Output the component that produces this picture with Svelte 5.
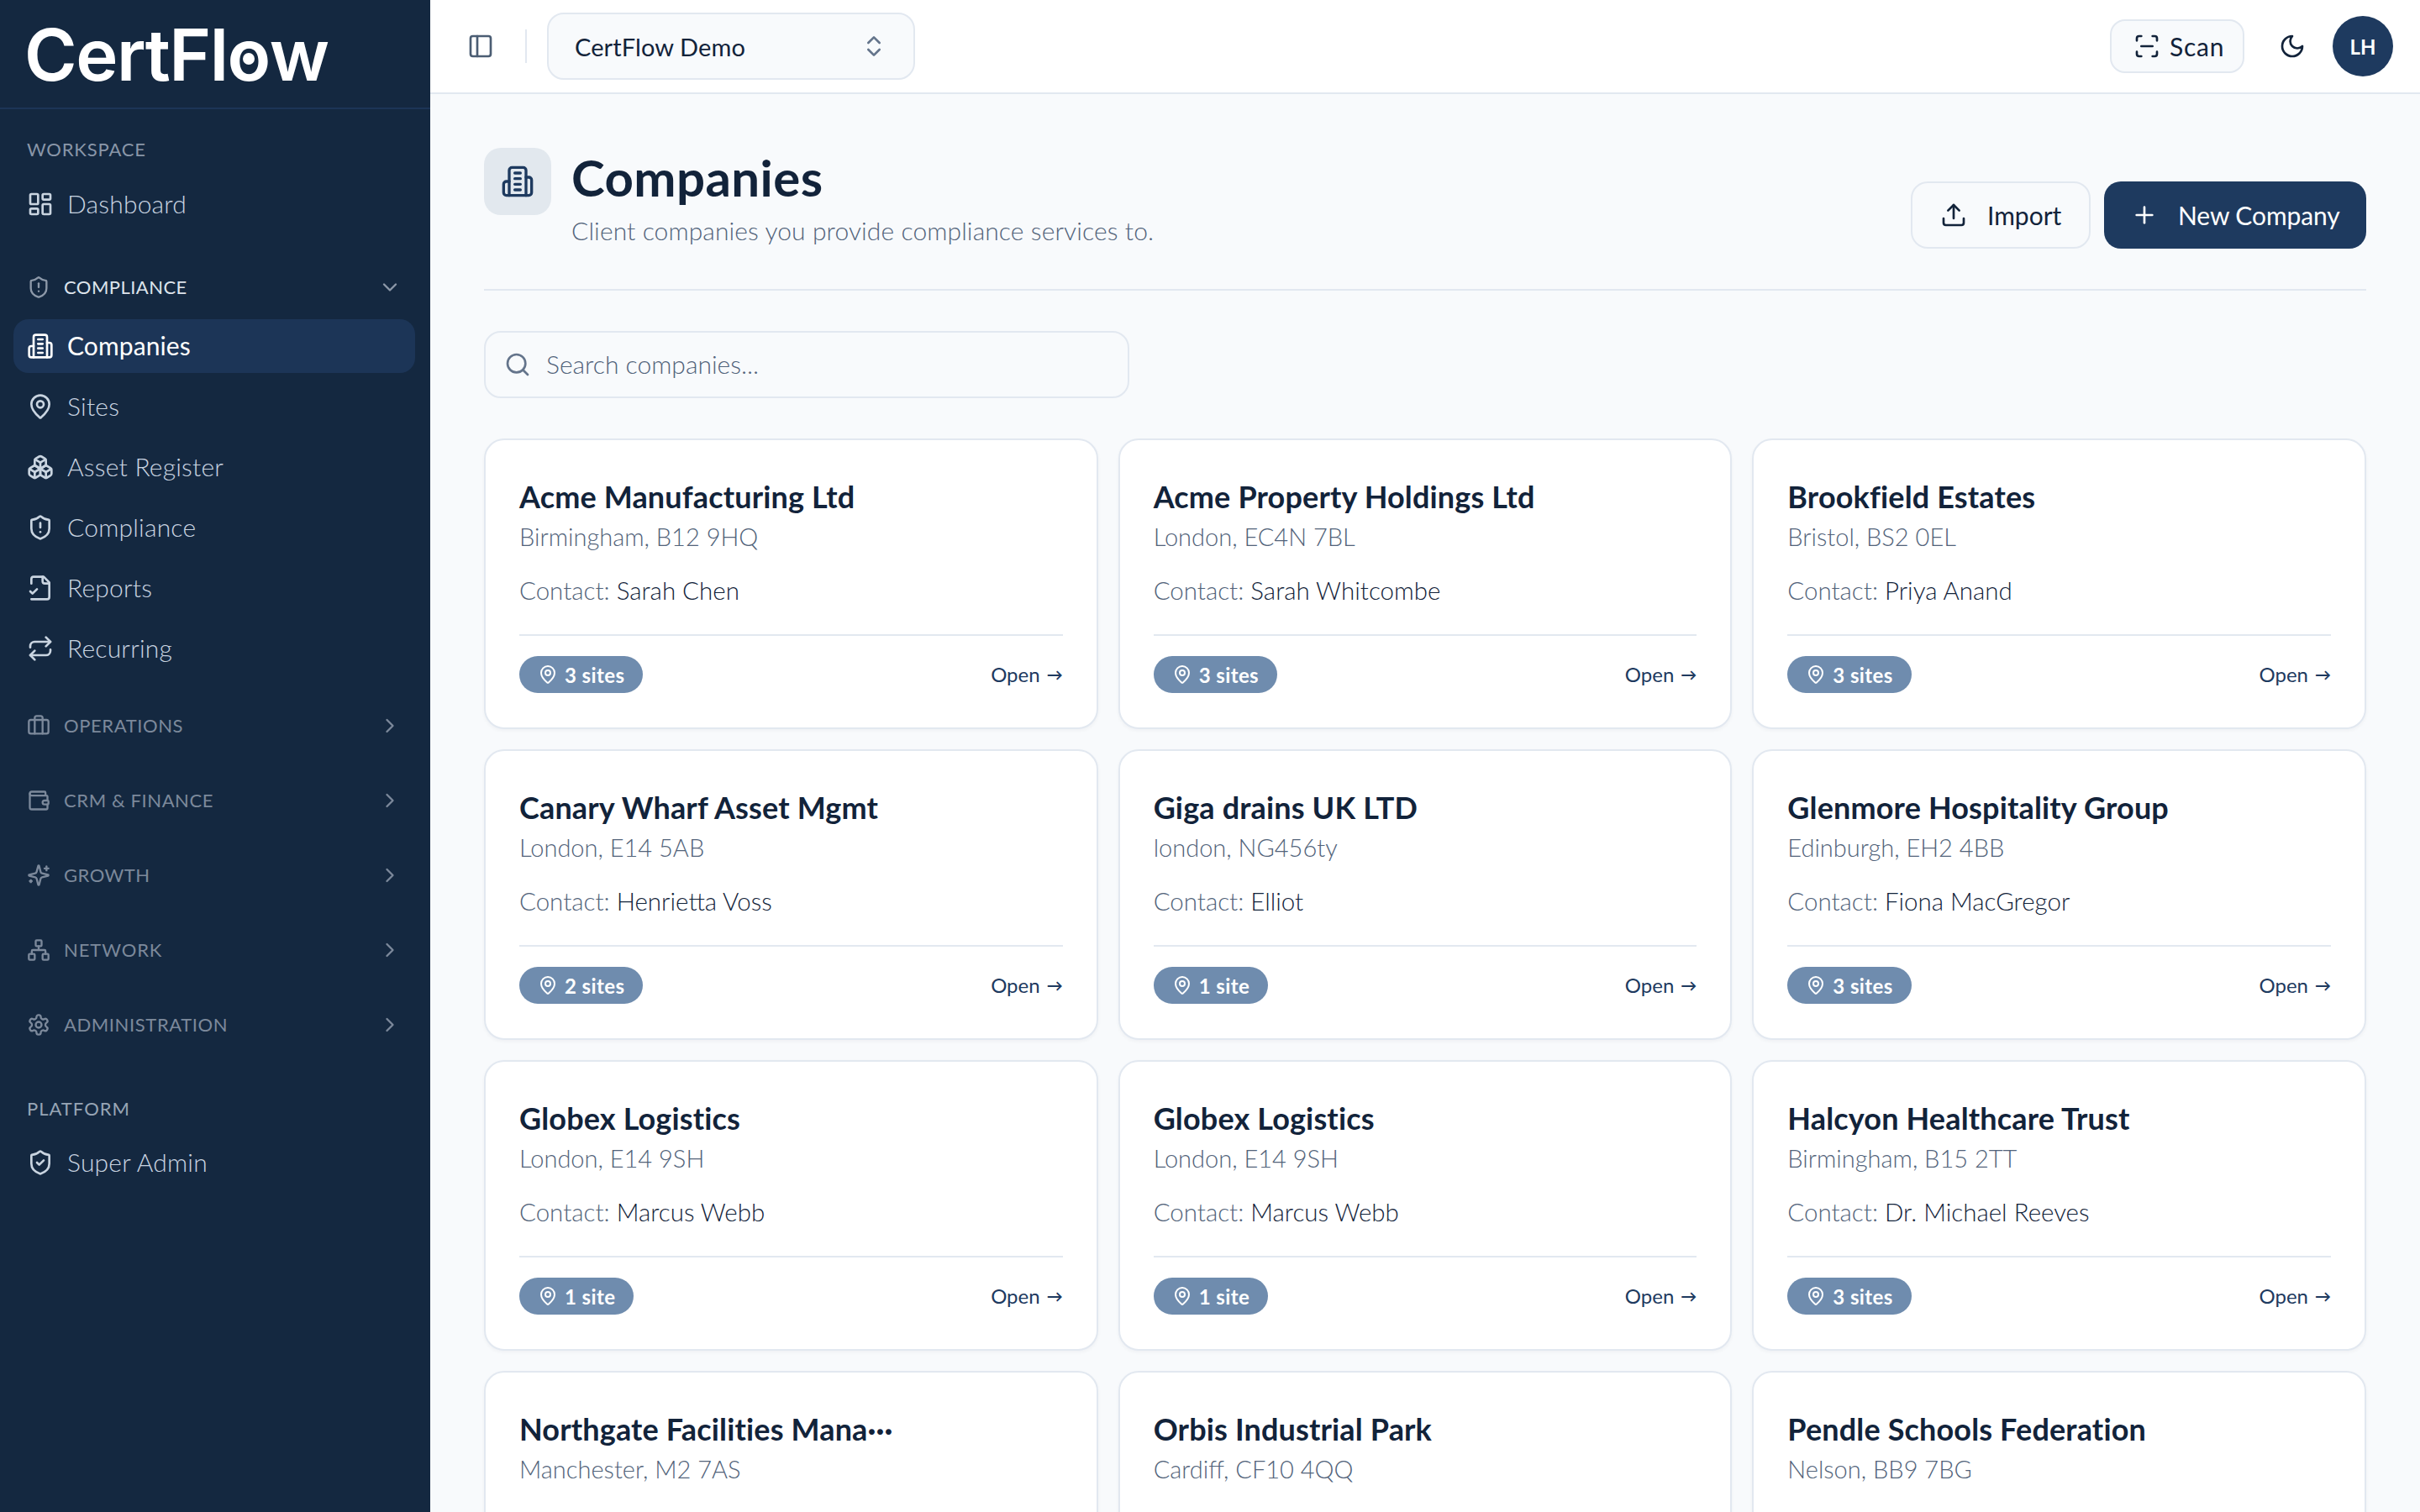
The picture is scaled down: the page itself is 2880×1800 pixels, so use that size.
<script>
  const I = {
    dash: '<rect x="3" y="3" width="7" height="9" rx="1"/><rect x="14" y="3" width="7" height="5" rx="1"/><rect x="14" y="12" width="7" height="9" rx="1"/><rect x="3" y="16" width="7" height="5" rx="1"/>',
    shieldAlert: '<path d="M20 13c0 5-3.5 7.5-7.66 8.95a1 1 0 0 1-.67-.01C7.5 20.5 4 18 4 13V6a1 1 0 0 1 1-1c2 0 4.5-1.2 6.24-2.72a1.17 1.17 0 0 1 1.52 0C14.51 3.81 17 5 19 5a1 1 0 0 1 1 1z"/><path d="M12 8v4"/><path d="M12 16h.01"/>',
    shieldCheck: '<path d="M20 13c0 5-3.5 7.5-7.66 8.95a1 1 0 0 1-.67-.01C7.5 20.5 4 18 4 13V6a1 1 0 0 1 1-1c2 0 4.5-1.2 6.24-2.72a1.17 1.17 0 0 1 1.52 0C14.51 3.81 17 5 19 5a1 1 0 0 1 1 1z"/><path d="m9 12 2 2 4-4"/>',
    building: '<path d="M6 22V4a2 2 0 0 1 2-2h8a2 2 0 0 1 2 2v18Z"/><path d="M6 12H4a2 2 0 0 0-2 2v6a2 2 0 0 0 2 2h2"/><path d="M18 9h2a2 2 0 0 1 2 2v9a2 2 0 0 1-2 2h-2"/><path d="M10 6h4"/><path d="M10 10h4"/><path d="M10 14h4"/><path d="M10 18h4"/>',
    pin: '<path d="M20 10c0 4.993-5.539 10.193-7.399 11.799a1 1 0 0 1-1.202 0C9.539 20.193 4 14.993 4 10a8 8 0 0 1 16 0"/><circle cx="12" cy="10" r="3"/>',
    boxes: '<path d="M2.97 12.92A2 2 0 0 0 2 14.63v3.24a2 2 0 0 0 .97 1.71l3 1.8a2 2 0 0 0 2.06 0L12 19v-5.5l-5-3-4.03 2.42Z"/><path d="m7 16.5-4.74-2.85"/><path d="m7 16.5 5-3"/><path d="M7 16.5v5.17"/><path d="M12 13.5V19l3.97 2.38a2 2 0 0 0 2.06 0l3-1.8a2 2 0 0 0 .97-1.71v-3.24a2 2 0 0 0-.97-1.71L17 10.5l-5 3Z"/><path d="m17 16.5-5-3"/><path d="m17 16.5 4.74-2.85"/><path d="M17 16.5v5.17"/><path d="M7.97 4.42A2 2 0 0 0 7 6.13v4.37l5 3 5-3V6.13a2 2 0 0 0-.97-1.71l-3-1.8a2 2 0 0 0-2.06 0l-3 1.8Z"/><path d="M12 8 7.26 5.15"/><path d="m12 8 4.74-2.85"/><path d="M12 13.5V8"/>',
    file: '<path d="M4 22h14a2 2 0 0 0 2-2V7l-5-5H6a2 2 0 0 0-2 2v4"/><path d="M14 2v4a2 2 0 0 0 2 2h4"/><path d="m3 15 2 2 4-4"/>',
    repeat: '<path d="m17 2 4 4-4 4"/><path d="M3 11v-1a4 4 0 0 1 4-4h14"/><path d="m7 22-4-4 4-4"/><path d="M21 13v1a4 4 0 0 1-4 4H3"/>',
    briefcase: '<path d="M16 20V4a2 2 0 0 0-2-2h-4a2 2 0 0 0-2 2v16"/><rect width="20" height="14" x="2" y="6" rx="2"/>',
    wallet: '<path d="M19 7V4a1 1 0 0 0-1-1H5a2 2 0 0 0 0 4h15a1 1 0 0 1 1 1v4h-3a2 2 0 0 0 0 4h3a1 1 0 0 0 1-1v-2a1 1 0 0 0-1-1"/><path d="M3 5v14a2 2 0 0 0 2 2h15a1 1 0 0 0 1-1v-4"/>',
    sparkles: '<path d="M9.937 15.5A2 2 0 0 0 8.5 14.063l-6.135-1.582a.5.5 0 0 1 0-.962L8.5 9.936A2 2 0 0 0 9.937 8.5l1.582-6.135a.5.5 0 0 1 .963 0L14.063 8.5A2 2 0 0 0 15.5 9.937l6.135 1.581a.5.5 0 0 1 0 .964L15.5 14.063a2 2 0 0 0-1.437 1.437l-1.582 6.135a.5.5 0 0 1-.963 0z"/><path d="M20 3v4"/><path d="M22 5h-4"/><path d="M4 17v2"/><path d="M5 18H3"/>',
    network: '<rect x="16" y="16" width="6" height="6" rx="1"/><rect x="2" y="16" width="6" height="6" rx="1"/><rect x="9" y="2" width="6" height="6" rx="1"/><path d="M5 16v-3a1 1 0 0 1 1-1h12a1 1 0 0 1 1 1v3"/><path d="M12 12V8"/>',
    settings: '<path d="M12.22 2h-.44a2 2 0 0 0-2 2v.18a2 2 0 0 1-1 1.73l-.43.25a2 2 0 0 1-2 0l-.15-.08a2 2 0 0 0-2.73.73l-.22.38a2 2 0 0 0 .73 2.73l.15.1a2 2 0 0 1 1 1.72v.51a2 2 0 0 1-1 1.74l-.15.09a2 2 0 0 0-.73 2.73l.22.38a2 2 0 0 0 2.73.73l.15-.08a2 2 0 0 1 2 0l.43.25a2 2 0 0 1 1 1.73V20a2 2 0 0 0 2 2h.44a2 2 0 0 0 2-2v-.18a2 2 0 0 1 1-1.73l.43-.25a2 2 0 0 1 2 0l.15.08a2 2 0 0 0 2.73-.73l.22-.39a2 2 0 0 0-.73-2.73l-.15-.08a2 2 0 0 1-1-1.74v-.5a2 2 0 0 1 1-1.74l.15-.09a2 2 0 0 0 .73-2.73l-.22-.38a2 2 0 0 0-2.73-.73l-.15.08a2 2 0 0 1-2 0l-.43-.25a2 2 0 0 1-1-1.73V4a2 2 0 0 0-2-2z"/><circle cx="12" cy="12" r="3"/>',
    down: '<path d="m6 9 6 6 6-6"/>',
    right: '<path d="m9 18 6-6-6-6"/>',
    panel: '<rect width="18" height="18" x="3" y="3" rx="2"/><path d="M9 3v18"/>',
    updown: '<path d="m7 15 5 5 5-5"/><path d="m7 9 5-5 5 5"/>',
    search: '<path d="m21 21-4.34-4.34"/><circle cx="11" cy="11" r="8"/>',
    scan: '<path d="M3 7V5a2 2 0 0 1 2-2h2"/><path d="M17 3h2a2 2 0 0 1 2 2v2"/><path d="M21 17v2a2 2 0 0 1-2 2h-2"/><path d="M7 21H5a2 2 0 0 1-2-2v-2"/><path d="M7 12h10"/>',
    moon: '<path d="M12 3a6 6 0 0 0 9 9 9 9 0 1 1-9-9Z"/>',
    upload: '<path d="M21 15v4a2 2 0 0 1-2 2H5a2 2 0 0 1-2-2v-4"/><path d="m17 8-5-5-5 5"/><path d="M12 3v12"/>',
    plus: '<path d="M5 12h14"/><path d="M12 5v14"/>'
  };

  const complianceItems = [
    { label: 'Companies', icon: 'building', active: true },
    { label: 'Sites', icon: 'pin' },
    { label: 'Asset Register', icon: 'boxes' },
    { label: 'Compliance', icon: 'shieldAlert' },
    { label: 'Reports', icon: 'file' },
    { label: 'Recurring', icon: 'repeat' }
  ];
  const groups = [
    { label: 'OPERATIONS', icon: 'briefcase', track: 0.6 },
    { label: 'CRM & FINANCE', icon: 'wallet', track: 0.6 },
    { label: 'GROWTH', icon: 'sparkles', track: 0.5 },
    { label: 'NETWORK', icon: 'network', track: 0.9 },
    { label: 'ADMINISTRATION', icon: 'settings', track: 0.6 }
  ];
  const companies = [
    ['Acme Manufacturing Ltd', 'Birmingham, B12 9HQ', 'Sarah Chen', '3 sites'],
    ['Acme Property Holdings Ltd', 'London, EC4N 7BL', 'Sarah Whitcombe', '3 sites'],
    ['Brookfield Estates', 'Bristol, BS2 0EL', 'Priya Anand', '3 sites'],
    ['Canary Wharf Asset Mgmt', 'London, E14 5AB', 'Henrietta Voss', '2 sites'],
    ['Giga drains UK LTD', 'london, NG456ty', 'Elliot', '1 site'],
    ['Glenmore Hospitality Group', 'Edinburgh, EH2 4BB', 'Fiona MacGregor', '3 sites'],
    ['Globex Logistics', 'London, E14 9SH', 'Marcus Webb', '1 site'],
    ['Globex Logistics', 'London, E14 9SH', 'Marcus Webb', '1 site'],
    ['Halcyon Healthcare Trust', 'Birmingham, B15 2TT', 'Dr. Michael Reeves', '3 sites'],
    ['Northgate Facilities Mana···', 'Manchester, M2 7AS'],
    ['Orbis Industrial Park', 'Cardiff, CF10 4QQ'],
    ['Pendle Schools Federation', 'Nelson, BB9 7BG']
  ];
</script>

{#snippet icon(name, cls)}
  <svg class={cls} viewBox="0 0 24 24" fill="none" stroke="currentColor" stroke-width="2" stroke-linecap="round" stroke-linejoin="round">{@html I[name]}</svg>
{/snippet}

<div class="app">
  <aside class="sidebar">
    <div class="brand">
      <span class="logo">CertFl<span class="logo-o">o</span>w</span>
    </div>
    <nav class="nav">
      <div class="label">WORKSPACE</div>
      <a class="item">{@render icon('dash', 'i32')}<span>Dashboard</span></a>

      <div class="group expanded">
        {@render icon('shieldAlert', 'i28')}<div class="group-name compliance">COMPLIANCE</div>{@render icon('down', 'i28 chev')}
      </div>
      <div class="items">
        {#each complianceItems as it}
          <a class="item" class:active={it.active}>{@render icon(it.icon, 'i32')}<span>{it.label}</span></a>
        {/each}
      </div>

      <div class="groups">
        {#each groups as g}
          <div class="group">
            {@render icon(g.icon, 'i28')}<div class="group-name" style="letter-spacing: {g.track}px">{g.label}</div>{@render icon('right', 'i28 chev')}
          </div>
        {/each}
      </div>

      <div class="label platform">PLATFORM</div>
      <a class="item">{@render icon('shieldCheck', 'i32')}<span>Super Admin</span></a>
    </nav>
  </aside>

  <div class="main">
    <header class="topbar">
      <button class="ghost">{@render icon('panel', 'i32')}</button>
      <div class="vr"></div>
      <button class="switcher"><span>CertFlow Demo</span>{@render icon('updown', 'i32 muted')}</button>
      <div class="spacer"></div>
      <button class="scan">{@render icon('scan', 'i32')}<span>Scan</span></button>
      <button class="ghost moon">{@render icon('moon', 'i32')}</button>
      <div class="avatar">LH</div>
    </header>

    <main class="content">
      <section class="page-head">
        <div class="head-left">
          <div class="head-icon">{@render icon('building', 'i40')}</div>
          <div>
            <h1>Companies</h1>
            <p>Client companies you provide compliance services to.</p>
          </div>
        </div>
        <div class="actions">
          <button class="btn outline">{@render icon('upload', 'i32')}<span>Import</span></button>
          <button class="btn primary">{@render icon('plus', 'i32')}<span>New Company</span></button>
        </div>
      </section>

      <div class="search">
        {@render icon('search', 'i32 muted')}<span>Search companies...</span>
      </div>

      <section class="grid">
        {#each companies as c}
          <article class="card">
            <h2>{c[0]}</h2>
            <div class="addr">{c[1]}</div>
            {#if c[2]}
              <div class="contact">Contact: <b>{c[2]}</b></div>
              <div class="foot">
                <span class="pill">{@render icon('pin', 'i24')}<span>{c[3]}</span></span>
                <span class="open-link">Open <span class="arrow">→</span></span>
              </div>
            {/if}
          </article>
        {/each}
      </section>
    </main>
  </div>
</div>

<style>
  :global(html), :global(body) { margin: 0; height: 100%; overflow: hidden; }
  :global(body) { font-family: "Lato", "Liberation Sans", sans-serif; color: #12233a; }
  svg { display: block; flex: none; }
  .i24 { width: 24px; height: 24px; }
  .i28 { width: 28px; height: 28px; }
  .i32 { width: 32px; height: 32px; }
  .i40 { width: 40px; height: 40px; }
  button { font: inherit; color: inherit; cursor: pointer; }

  .app { display: flex; height: 1800px; width: 2880px; overflow: hidden; background: #f8fafc; }

  .sidebar { width: 512px; flex: none; background: #142840; color: #c3cfdc; }
  .brand { height: 128px; box-sizing: content-box; border-bottom: 2px solid #1c3557; display: flex; align-items: center; padding-left: 29px; }
  .logo { font-family: "Inter", sans-serif; font-weight: 600; font-size: 85px; letter-spacing: -1.5px; color: #fff; line-height: 1; position: relative; top: 1px; }
  .logo-o { position: relative; display: inline-block; }
  .logo-o::after { content: ""; position: absolute; left: 50%; top: 56%; width: 14px; height: 14px; margin: -7px 0 0 -7px; background: #fff; border-radius: 50%; }

  .nav { padding: 32px 18px 0 16px; }
  .label { font-size: 22px; letter-spacing: 0.8px; line-height: 32px; padding-left: 16px; color: #8996a8; margin-bottom: 17px; }
  .label.platform { margin-top: 52px; margin-bottom: 16px; color: #97a5b5; letter-spacing: 1px; }
  .item { display: flex; align-items: center; gap: 16px; height: 64px; padding-left: 16px; border-radius: 18px; font-size: 30px; font-weight: 300; letter-spacing: 0.2px; color: #c9d4e0; }
  .item span { padding-bottom: 2px; }
  .item.active { background: #1c3557; color: #fff; font-weight: 400; letter-spacing: 0.1px; }
  .items { display: flex; flex-direction: column; gap: 8px; margin-top: 6px; }
  .group { display: flex; align-items: center; height: 64px; padding-left: 16px; color: #7c899b; font-size: 22px; }
  .group.expanded { margin-top: 35px; color: #dde4ec; }
  .group.expanded svg { color: #8d99a9; }
  .group-name { margin-left: 16px; flex: 1; padding-bottom: 2px; }
  .compliance { letter-spacing: 0.45px; }
  .chev { margin-right: 16px; }
  .groups { display: flex; flex-direction: column; gap: 25px; margin-top: 28px; }

  .main { flex: 1; min-width: 0; display: flex; flex-direction: column; }
  .topbar { height: 110px; border-bottom: 2px solid #e2e8f0; background: #fff; display: flex; align-items: center; padding: 0 32px 0 44px; flex: none; }
  .ghost { background: none; border: 0; padding: 0; display: flex; color: #4b5d73; }
  .ghost.moon { color: #12233a; margin-left: 41px; margin-right: 32px; }
  .vr { width: 2px; height: 40px; background: #e2e8f0; margin: 0 24px 0 37px; }
  .switcher { width: 438px; height: 80px; display: flex; align-items: center; justify-content: space-between; box-sizing: border-box; padding: 0 31px; background: #f8fafc; border: 2px solid #e2e8f0; border-radius: 20px; font-size: 29px; letter-spacing: 0.1px; }
  .muted { color: #64748b; }
  .spacer { flex: 1; }
  .scan { height: 64px; width: 160px; box-sizing: border-box; display: flex; align-items: center; gap: 11px; padding: 0 0 0 26px; background: #f8fafc; border: 2px solid #e2e8f0; border-radius: 18px; font-size: 30px; letter-spacing: 0.8px; }
  .avatar { width: 72px; height: 72px; border-radius: 50%; background: #1e3a5f; color: #fff; font-size: 24px; font-weight: 700; display: flex; align-items: center; justify-content: center; }

  .content { padding: 64px 64px 0; flex: 1; overflow: hidden; }
  .page-head { display: flex; justify-content: space-between; padding-bottom: 48px; border-bottom: 2px solid #e2e8f0; margin-bottom: 48px; }
  .head-left { display: flex; gap: 24px; min-height: 120px; }
  .head-icon { width: 80px; height: 80px; border-radius: 20px; background: #e2e8ee; color: #1e3a5f; display: flex; align-items: center; justify-content: center; }
  h1 { margin: 0; font-size: 60px; line-height: 70px; font-weight: 700; letter-spacing: 0.4px; color: #12233a; }
  .page-head p { margin: 8px 0 0; font-size: 30px; line-height: 40px; font-weight: 300; letter-spacing: 0.1px; color: #52637a; }
  .actions { display: flex; gap: 16px; align-self: flex-end; }
  .btn { height: 80px; box-sizing: border-box; display: flex; align-items: center; border-radius: 20px; font-size: 30px; }
  .btn.outline { width: 214px; padding-left: 33px; gap: 24px; background: #f8fafc; border: 2px solid #e2e8f0; }
  .btn.primary { width: 312px; padding-left: 32px; gap: 24px; background: #1e3a5f; color: #fff; border: 0; letter-spacing: -0.1px; }

  .search { width: 768px; height: 80px; box-sizing: border-box; display: flex; align-items: center; gap: 18px; padding-left: 22px; background: #f8fafc; border: 2px solid #e2e8f0; border-radius: 20px; font-size: 30px; font-weight: 300; color: #52637a; margin-bottom: 48px; }
  .search span { padding-bottom: 2px; }

  .grid { display: grid; grid-template-columns: repeat(3, 1fr); gap: 24px; }
  .card { box-sizing: border-box; min-height: 346px; padding: 40px 40px 41px; background: #fff; border: 2px solid #e2e8f0; border-radius: 24px; box-shadow: 0 2px 4px rgba(15, 35, 60, 0.04); }
  h2 { margin: 0; font-size: 36px; line-height: 54px; font-weight: 700; letter-spacing: 0.15px; color: #12233a; }
  .addr { font-size: 29px; line-height: 41px; font-weight: 300; color: #52637a; }
  .contact { margin-top: 24px; font-size: 29.5px; line-height: 40px; font-weight: 300; color: #52637a; }
  .contact b { font-weight: 300; color: #12233a; }
  .foot { display: flex; justify-content: space-between; align-items: center; margin-top: 32px; padding-top: 24px; border-top: 2px solid #e2e8f0; }
  .pill { height: 44px; display: inline-flex; align-items: center; gap: 8px; padding: 0 22px; border-radius: 22px; background: #6f8cae; color: #fff; font-size: 24px; letter-spacing: 0.4px; font-weight: 700; }
  .open-link { font-size: 24px; font-weight: 400; color: #1e3a5f; display: inline-flex; align-items: center; gap: 8px; padding-bottom: 2px; }
  .arrow { font-size: 19px; font-weight: 700; }
</style>
